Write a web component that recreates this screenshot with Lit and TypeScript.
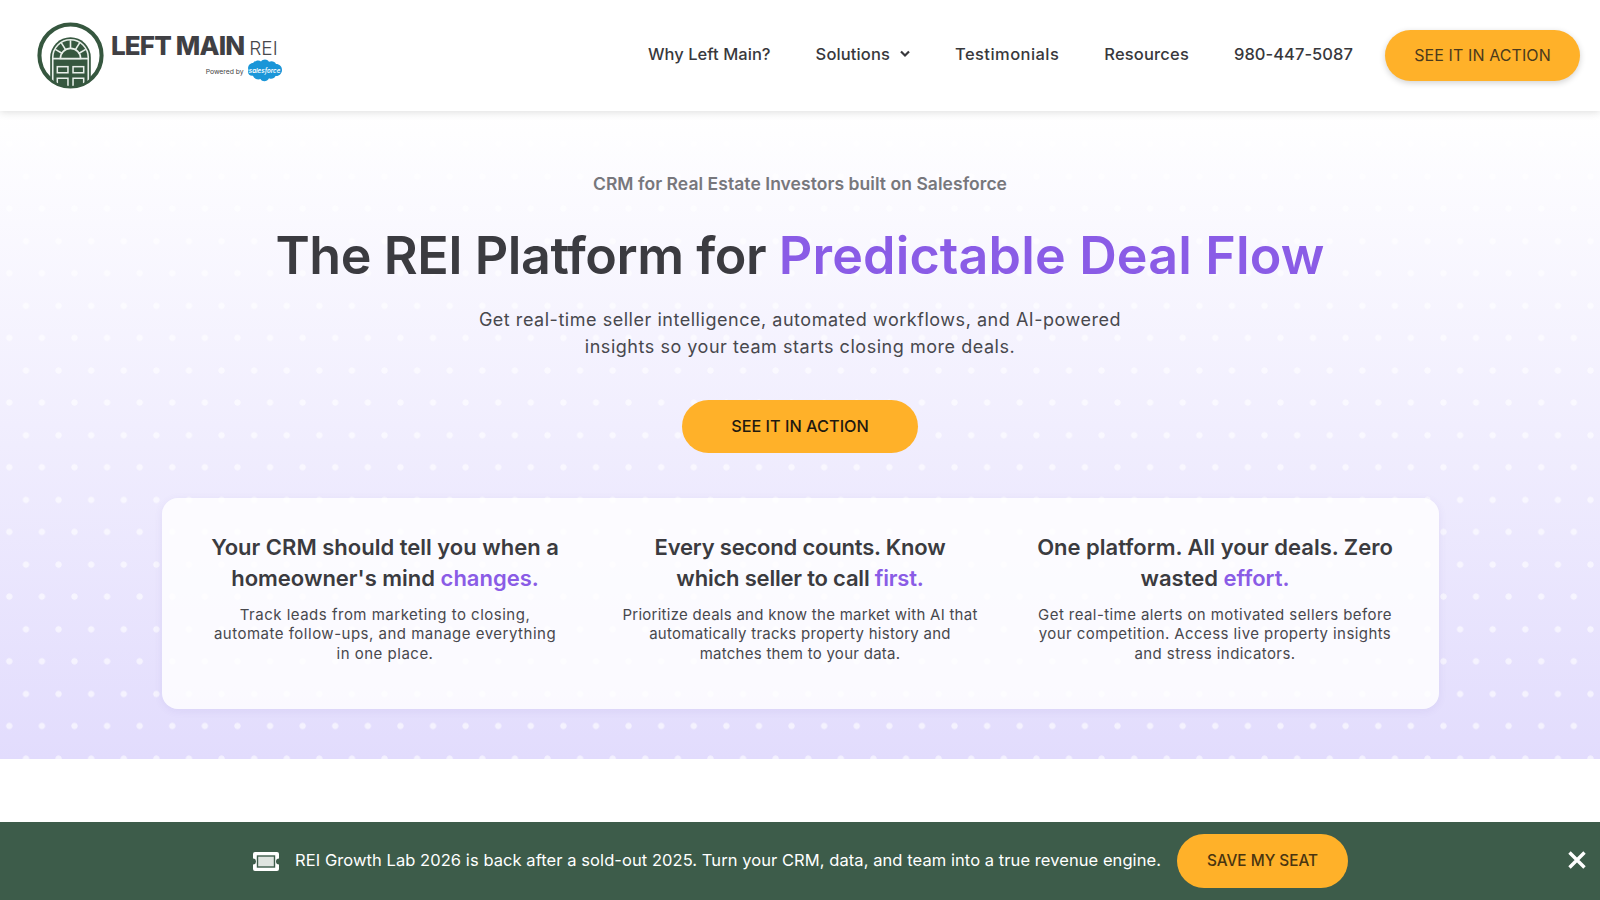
import { LitElement, html, css } from "lit";
import { customElement } from "lit/decorators.js";

const cards = [
  { h: html`Your CRM should tell you when a<br />homeowner's mind <em>changes.</em>`, p: html`Track leads from marketing to closing,<br />automate follow-ups, and manage everything<br />in one place.` },
  { h: html`Every second counts. Know<br />which seller to call <em>first.</em>`, p: html`Prioritize deals and know the market with AI that<br />automatically tracks property history and<br />matches them to your data.` },
  { h: html`One platform. All your deals. Zero<br />wasted <em>effort.</em>`, p: html`Get real-time alerts on motivated sellers before<br />your competition. Access live property insights<br />and stress indicators.` },
];

@customElement("app-root")
export class AppRoot extends LitElement {
  static styles = css`
    :host { display: block; font-family: Inter, "Open Sans", sans-serif; color: #3b3b40; }
    .page { height: 900px; display: flex; flex-direction: column; overflow: hidden; background: #fff; }
    header { height: 111px; flex: none; display: flex; align-items: center; justify-content: space-between; padding: 0 20px 0 37px; background: #fff; box-shadow: 0 1px 8px rgba(0,0,0,.14); position: relative; z-index: 2; box-sizing: border-box; }
    .logo { display: flex; align-items: flex-start; gap: 7px; }
    .mark { width: 67px; height: 67px; display: block; flex: none; }
    .wordblock { display: flex; flex-direction: column; margin-top: 7px; }
    .word { display: flex; align-items: baseline; gap: 5px; line-height: 34px; white-space: nowrap; }
    .word b { font-size: 26px; font-weight: 800; color: #404044; letter-spacing: -.85px; }
    .word span { font-size: 19px; font-weight: 300; color: #48484c; }
    .powered { display: flex; align-items: center; justify-content: flex-end; gap: 2px; font-size: 6.8px; color: #444; margin-top: -8px; margin-right: -5px; }
    .powered svg { width: 37px; height: 27px; display: block; }
    nav { display: flex; align-items: center; font-size: 16.5px; font-weight: 500; color: #38383c; white-space: nowrap; }
    nav a { margin-right: 45px; margin-bottom: 4px; display: flex; align-items: center; gap: 10px; letter-spacing: .05px; }
    nav a.sol { letter-spacing: .12px; }
    nav a.tes { letter-spacing: .45px; }
    nav a.res { letter-spacing: .17px; }
    nav a.phone { margin-right: 32px; }
    nav svg { width: 10px; height: 8px; display: block; }
    .cta { background: #ffb129; border-radius: 27px; display: flex; align-items: center; justify-content: center; font-weight: 500; white-space: nowrap; box-sizing: border-box; }
    .cta.top { width: 195px; height: 51px; padding-bottom: 1px; font-size: 16px; font-weight: 400; letter-spacing: .1px; color: #4b3a1c; box-shadow: 0 2px 6px rgba(0,0,0,.18); }
    .hero { height: 648px; flex: none; box-sizing: border-box; padding-top: 61px; display: flex; flex-direction: column; align-items: center; text-align: center;
      background-image: radial-gradient(circle, rgba(255,255,255,.6) 2.8px, transparent 3.5px), radial-gradient(circle, rgba(255,255,255,.6) 2.8px, transparent 3.5px), linear-gradient(180deg, #ffffff 0%, #e2dcfd 100%);
      background-size: 32.6px 64.7px, 32.6px 64.7px, 100% 100%;
      background-position: -7px .45px, 9.7px -31.55px, 0 0;
    }
    .sub { font-size: 17.5px; font-weight: 600; letter-spacing: .05px; color: #77777c; line-height: 24px; }
    h1 { margin: 27px 0 0; font-size: 52px; line-height: 66px; font-weight: 600; color: #3b3b40; letter-spacing: -.45px; white-space: nowrap; }
    h1 em { letter-spacing: .15px; }
    h1 em, h3 em { font-style: normal; color: #8a5ce6; }
    .lead { margin: 17px 0 0; font-size: 18px; line-height: 27px; color: #48484d; letter-spacing: .53px; }
    .cta.main { margin-top: 40px; width: 236px; height: 53px; padding-bottom: 2px; font-size: 16.3px; color: #1f1a10; }
    .card { margin-top: 45px; width: 1277px; height: 211px; box-sizing: border-box; padding: 34px 16px 0; display: grid; grid-template-columns: repeat(3, 1fr); background: rgba(255,255,255,.82); border-radius: 16px; box-shadow: 0 2px 8px rgba(90,70,170,.08); }
    h3 { margin: 0; font-size: 22px; line-height: 31px; font-weight: 600; color: #3b3b40; white-space: nowrap; }
    .card > div:nth-child(2) h3 { letter-spacing: -.2px; }
    .card p { margin: 11px 0 0; font-size: 15px; line-height: 19.4px; color: #48484d; letter-spacing: .5px; white-space: nowrap; }
    .card > div:nth-child(2) p { letter-spacing: .27px; }
    .card > div:nth-child(3) p { letter-spacing: .42px; }
    .spacer { flex: 1; }
    .banner { height: 78px; flex: none; background: #3d5c4a; display: flex; align-items: center; color: #fff; position: relative; padding-left: 252px; box-sizing: border-box; }
    .ticket { width: 28px; height: 19px; display: block; flex: none; margin-right: 15px; }
    .msg { font-size: 16.5px; letter-spacing: .067px; white-space: nowrap; margin-right: 16px; margin-bottom: 2px; }
    .cta.seat { width: 171px; height: 54px; padding-bottom: 2px; font-size: 15.3px; color: #4a3510; }
    .close { position: absolute; right: 12px; top: 27px; width: 22px; height: 22px; display: block; }
  `;

  render() {
    return html`<div class="page">
      <header>
        <div class="logo">
          <svg class="mark" viewBox="0 0 66 66" aria-label="Left Main logo">
            <defs><clipPath id="c"><circle cx="33" cy="33" r="30"/></clipPath></defs>
            <circle cx="33" cy="33" r="30.6" fill="#fff" stroke="#36573f" stroke-width="4"/>
            <g clip-path="url(#c)">
              <path d="M13 66V35a20 20 0 0 1 40 0V66Z" fill="#36573f"/>
              <path d="M15.5 66V35a17.500 17.500 0 0 1 35 0V66" fill="none" stroke="#e8eee9" stroke-width="1.600"/>
              <path d="M15.5 36H50.5" stroke="#e8eee9" stroke-width="1.800"/>
              <path d="M23 36a10 10 0 0 1 20 0Z" fill="#36573f" stroke="#e8eee9" stroke-width="1.600"/>
              <path d="M33 18V26M24 20.500l4 6.500M42 20.500l-4 6.500M18 27l7 4M48 27l-7 4" stroke="#e8eee9" stroke-width="1.600"/>
              <rect x="20" y="44" width="10.500" height="6" fill="none" stroke="#e8eee9" stroke-width="1.500"/>
              <rect x="35.500" y="44" width="10.500" height="6" fill="none" stroke="#e8eee9" stroke-width="1.500"/>
              <path d="M20 66V55.500H30.500V66M35.500 66V55.500H46V66" fill="none" stroke="#e8eee9" stroke-width="1.500"/>
            </g>
          </svg>
          <div class="wordblock">
            <div class="word"><b>LEFT MAIN</b><span>REI</span></div>
            <div class="powered">Powered by
              <svg viewBox="0 0 37 27"><path d="M15 3.500c2-2.500 6-2.700 8 .2 2.500-1.200 6-.5 7 2.300 3.500 0 6 2.500 6 6s-3 6.500-6.500 6c-1 2.500-4 3.500-6.500 2.300-1.500 3.500-7 4-8.500.7-3 1.200-6.500-.3-7.500-3.200C3.500 18.300 1 15.500 2.500 12 1 9 3.500 5 7 5c2-2.500 6-3.500 8-1.500Z" fill="#1b96d8"/><text x="18.500" y="14.500" text-anchor="middle" font-size="6.200" font-weight="600" fill="#fff" font-style="italic">salesforce</text></svg>
            </div>
          </div>
        </div>
        <nav>
          <a>Why Left Main?</a>
          <a class="sol">Solutions <svg viewBox="0 0 10 8"><path d="M1 1.500 5 5.500 9 1.500" fill="none" stroke="#38383c" stroke-width="2.200"/></svg></a>
          <a class="tes">Testimonials</a>
          <a class="res">Resources</a>
          <a class="phone">980-447-5087</a>
          <div class="cta top">SEE IT IN ACTION</div>
        </nav>
      </header>
      <section class="hero">
        <div class="sub">CRM for Real Estate Investors built on Salesforce</div>
        <h1>The REI Platform for <em>Predictable Deal Flow</em></h1>
        <p class="lead">Get real-time seller intelligence, automated workflows, and AI-powered<br />insights so your team starts closing more deals.</p>
        <div class="cta main">SEE IT IN ACTION</div>
        <div class="card">
          ${cards.map((c) => html`<div><h3>${c.h}</h3><p>${c.p}</p></div>`)}
        </div>
      </section>
      <div class="spacer"></div>
      <div class="banner">
        <svg class="ticket" viewBox="0 0 28 19"><path d="M3 0H25a2 2 0 0 1 2 2V6.500a3 3 0 0 0 0 6V17a2 2 0 0 1-2 2H3a2 2 0 0 1-2-2V12.500a3 3 0 0 0 0-6V2a2 2 0 0 1 2-2Z" fill="#fff"/><rect x="5.500" y="4" width="17" height="11" fill="#dfe4e0" stroke="#3d5c4a" stroke-width="1.400"/></svg>
        <div class="msg">REI Growth Lab 2026 is back after a sold-out 2025. Turn your CRM, data, and team into a true revenue engine.</div>
        <div class="cta seat">SAVE MY SEAT</div>
        <svg class="close" viewBox="0 0 22 22"><path d="M3.500 3.500 18.500 18.500M18.500 3.500 3.500 18.500" stroke="#fff" stroke-width="3.400"/></svg>
      </div>
    </div>`;
  }
}
